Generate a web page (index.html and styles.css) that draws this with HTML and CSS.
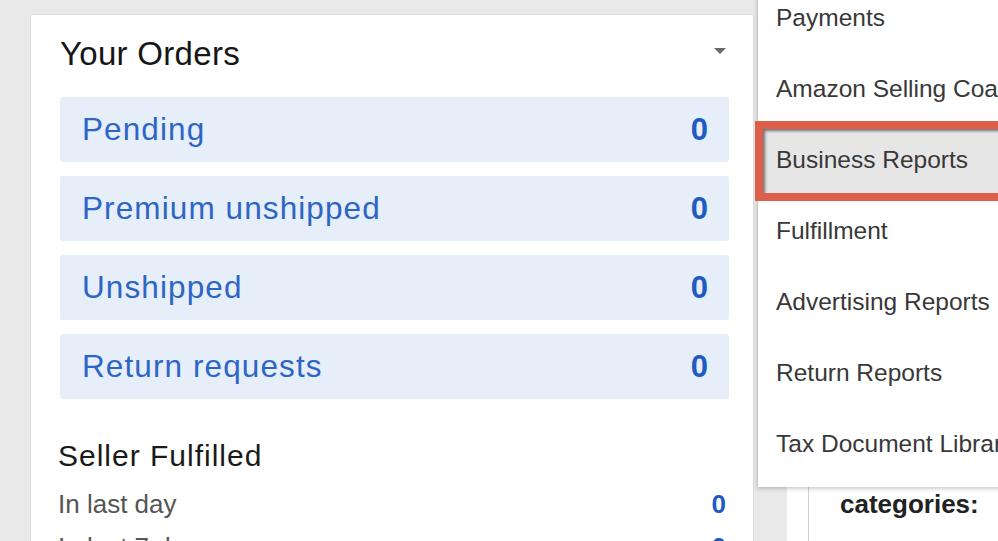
FILE: index.html
```html
<!DOCTYPE html>
<html lang="en">
<head>
    <meta charset="UTF-8">
    <meta name="viewport" content="width=device-width, initial-scale=1.0">
    <title>Seller Central - Orders</title>
    <link rel="stylesheet" href="styles.css">
</head>
<body>
    <main class="page">
        <section class="orders">
            <div class="orders-head">
                <h2>Your Orders</h2>
                <span class="caret"></span>
            </div>
            <ul class="order-list">
                <li class="order-row"><a href="#">Pending</a><span class="count">0</span></li>
                <li class="order-row"><a href="#">Premium unshipped</a><span class="count">0</span></li>
                <li class="order-row"><a href="#">Unshipped</a><span class="count">0</span></li>
                <li class="order-row"><a href="#">Return requests</a><span class="count">0</span></li>
            </ul>
            <h3 class="section-title">Seller Fulfilled</h3>
            <ul class="stats">
                <li><span>In last day</span><span class="count">0</span></li>
                <li><span>In last 7 days</span><span class="count">0</span></li>
            </ul>
        </section>
        <aside class="side">
            <div class="side-inner">
                <p class="side-title">categories:</p>
            </div>
        </aside>

        <!-- Reports dropdown -->
        <ul class="menu">
            <li>Payments</li>
            <li>Amazon Selling Coach</li>
            <li class="active">Business Reports</li>
            <li>Fulfillment</li>
            <li>Advertising Reports</li>
            <li>Return Reports</li>
            <li>Tax Document Library</li>
        </ul>
    </main>
</body>
</html>
```

FILE: styles.css
```css
html,
body {
    margin: 0;
    height: 100%;
    overflow: hidden;
}

body {
    background-color: #e9e9e9;
    font-family: "Liberation Sans", Arial, sans-serif;
}

.page {
    display: flex;
    position: relative;
    padding: 14px 0 0 30px;
}

.orders {
    width: 724px;
    box-sizing: border-box;
    background-color: #fff;
    border: 1px solid #dcdcdc;
    border-radius: 2px;
    padding: 19px 24px 0 29px;
}

.orders-head {
    display: flex;
    justify-content: space-between;
    align-items: center;
    margin-bottom: 23px;
}

.orders-head h2 {
    margin: 0;
    font-size: 33px;
    line-height: 40px;
    font-weight: normal;
    letter-spacing: 0.3px;
    color: #161616;
}

.caret {
    width: 0;
    height: 0;
    border-left: 6px solid transparent;
    border-right: 6px solid transparent;
    border-top: 6px solid #6a6a6a;
    margin: -6px 3px 0 0;
}

.order-list {
    list-style: none;
    margin: 0;
    padding: 0;
    display: flex;
    flex-direction: column;
    gap: 14px;
}

.order-row {
    display: flex;
    justify-content: space-between;
    align-items: center;
    height: 65px;
    padding: 0 21px 0 22px;
    background-color: #e5eef9;
    border-radius: 3px;
}

.order-row a {
    color: #2d65c6;
    font-size: 31.5px;
    letter-spacing: 1.1px;
    text-decoration: none;
}

.count {
    color: #1f5cc2;
    font-weight: bold;
}

.order-row .count {
    font-size: 31px;
}

.section-title {
    margin: 39px 0 15px -2px;
    font-size: 30px;
    line-height: 36px;
    font-weight: normal;
    letter-spacing: 1px;
    color: #1a1a1a;
}

.stats {
    list-style: none;
    margin: 0 0 0 -2px;
    padding: 0 3px 0 0;
}

.stats li {
    display: flex;
    justify-content: space-between;
    font-size: 26px;
    line-height: 30px;
    margin-bottom: 13px;
    color: #555;
}

.side {
    flex: 1;
    margin-left: 33px;
    background-color: #fff;
    padding-left: 21px;
}

.side-inner {
    border-left: 1px solid #cfcfcf;
    padding: 475px 0 0 31px;
    height: 100%;
}

.side-title {
    margin: 0;
    font-size: 26px;
    line-height: 30px;
    font-weight: bold;
    color: #222;
}

.menu {
    position: absolute;
    left: 757px;
    top: -18px;
    width: 300px;
    list-style: none;
    margin: 0;
    padding: 0 0 8px;
    background-color: #fff;
    border-left: 1px solid #c9c9c9;
    box-shadow: 0 2px 4px rgba(0, 0, 0, 0.2);
}

.menu li {
    display: flex;
    align-items: center;
    height: 71px;
    padding-left: 18px;
    font-size: 24.5px;
    color: #383838;
    white-space: nowrap;
}

.menu li.active {
    position: relative;
    background-color: #e6e6e6;
    box-shadow: inset 8px 8px 3px -1px rgba(0, 0, 0, 0.5);
}

.menu li.active::after {
    content: '';
    position: absolute;
    top: -3px;
    right: -5px;
    bottom: -6px;
    left: -3px;
    border: 8px solid #dd5e4b;
}
```
